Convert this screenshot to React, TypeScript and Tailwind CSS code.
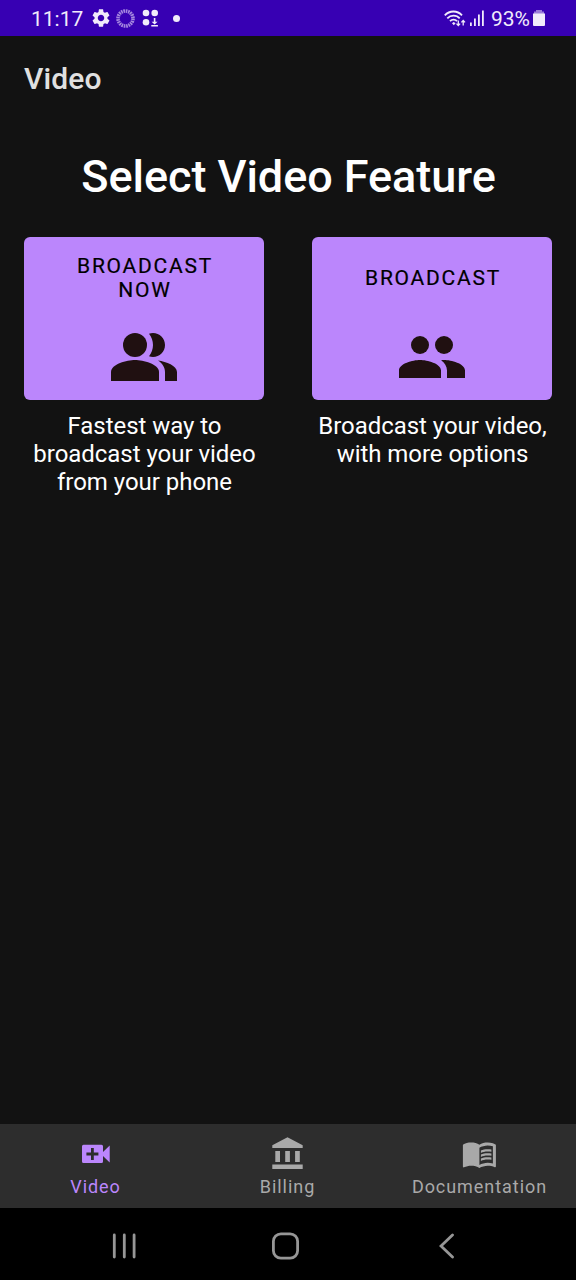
import type { ReactNode } from 'react';

const features = [
  {
    title: 'Broadcast Now',
    text: 'Fastest way to broadcast your video from your phone',
    icon: (
      <>
        <circle cx="9" cy="8" r="4" />
        <path d="M16.67 13.13C18.04 14.06 19 15.32 19 17v3h4v-3c0-2.18-3.57-3.47-6.33-3.87z" />
        <path d="M15 12c2.21 0 4-1.79 4-4s-1.79-4-4-4c-.47 0-.91.1-1.33.24C14.5 5.27 15 6.58 15 8s-.5 2.73-1.33 3.76c.42.14.86.24 1.33.24z" />
        <path d="M9 13c-2.67 0-8 1.34-8 4v3h16v-3c0-2.66-5.33-4-8-4z" />
      </>
    ),
  },
  {
    title: 'Broadcast',
    text: 'Broadcast your video, with more options',
    icon: (
      <>
        <circle cx="8" cy="8" r="3" />
        <circle cx="16" cy="8" r="3" />
        <path d="M8 13c-2.33 0-7 1.17-7 3.5V19h14v-2.5c0-2.33-4.67-3.5-7-3.5zm8 0c-.29 0-.62.02-.97.05 1.16.84 1.97 1.97 1.97 3.45V19h6v-2.5c0-2.33-4.67-3.5-7-3.5z" />
      </>
    ),
  },
];

const StatusBar = () => (
  <div className="flex h-9 items-center justify-between bg-[#3700b3] px-[31px] text-[21px] leading-9 text-[#f1ebfb]">
    <div className="flex items-center">
      <span className="w-[53px] pt-px">11:17</span>
      <svg className="ml-2 size-[18px]" viewBox="2 2 20 20" fill="currentColor">
        <path d="M19.14 12.94c.04-.3.06-.61.06-.94 0-.32-.02-.64-.07-.94l2.03-1.58c.18-.14.23-.41.12-.61l-1.92-3.32c-.12-.22-.37-.29-.59-.22l-2.39.96c-.5-.38-1.03-.7-1.62-.94l-.36-2.54c-.04-.24-.24-.41-.48-.41h-3.84c-.24 0-.43.17-.47.41l-.36 2.54c-.59.24-1.13.57-1.62.94l-2.39-.96c-.22-.08-.47 0-.59.22L2.74 8.87c-.12.21-.08.47.12.61l2.03 1.58c-.05.3-.09.63-.09.94s.02.64.07.94l-2.03 1.58c-.18.14-.23.41-.12.61l1.92 3.32c.12.22.37.29.59.22l2.39-.96c.5.38 1.03.7 1.62.94l.36 2.54c.05.24.24.41.48.41h3.84c.24 0 .44-.17.47-.41l.36-2.54c.59-.24 1.13-.56 1.62-.94l2.39.96c.22.08.47 0 .59-.22l1.92-3.32c.12-.22.07-.47-.12-.61l-2.01-1.58zM12 15.6c-1.98 0-3.6-1.62-3.6-3.6s1.62-3.6 3.6-3.6 3.6 1.62 3.6 3.6-1.62 3.6-3.6 3.6z" />
      </svg>
      <svg className="ml-1.5 size-[19px]" viewBox="0 0 19 19" fill="none" stroke="#a588df">
        <circle cx="9.5" cy="9.5" r="7.5" strokeWidth="3.6" strokeDasharray="1.65 0.706" />
      </svg>
      <svg className="ml-[7px] h-[18px] w-[17px]" viewBox="0 0 17 18" fill="currentColor">
        <circle cx="4" cy="4" r="3.3" />
        <circle cx="12.7" cy="4" r="3.3" />
        <circle cx="4" cy="13.2" r="3.3" />
        <path d="M11.8 9h1.6v3.7h2.2l-3 2.7-3-2.7h2.2zM9.3 16h6.6v1.5H9.3z" />
      </svg>
      <div className="ml-[14px] size-[7px] rounded-full bg-[#f1ebfb]" />
    </div>
    <div className="flex items-center">
      <svg className="mt-px h-[18px] w-[22px]" viewBox="0 0 22 18" fill="none" stroke="currentColor">
        <path d="M.8 5.3C5.5.2 13.4.2 18 5.3M3.3 8.3c3.4-3.7 9.1-3.7 12.4 0M6 11.1c2-2.1 5.1-2.1 7 0" strokeWidth="1.8" />
        <path d="M8 13.2l1.7-1.2 1.9 1.2-1.8 2z" fill="currentColor" stroke="none" />
        <path d="M14.3 10.5v5M12.5 13.6l1.8 2 1.8-2M19.2 15.5v-5M17.4 12.4l1.8-2 1.8 2" strokeWidth="1.3" />
      </svg>
      <svg className="ml-[3px] h-4 w-[15px]" viewBox="0 0 15 16" fill="currentColor">
        <path d="M1 12.5h1.8V16H1zM5 8.5h1.8V16H5zM9 4.5h1.8V16H9zM13 .5h1.8V16H13z" />
      </svg>
      <span className="ml-[7px] w-[42px] pt-px tracking-[-0.1px]">93%</span>
      <svg className="mb-px h-4 w-3" viewBox="0 0 12 16">
        <path d="M3 0h6v2H3zM1 1.5h10V4H1z" fill="#9b7cda" />
        <path d="M0 3.5h12V15a1 1 0 0 1-1 1H1a1 1 0 0 1-1-1z" fill="currentColor" />
      </svg>
    </div>
  </div>
);

const NavItem = ({ label, active, children }: { label: string; active?: boolean; children: ReactNode }) => (
  <button className={`flex flex-1 flex-col items-center pt-3 ${active ? 'text-[#bb86fc]' : 'text-[#a9a9a9]'}`}>
    <svg className="size-9" viewBox="0 0 36 36" fill="currentColor">
      {children}
    </svg>
    <span className="mt-[3px] pr-px text-[18px] leading-6 tracking-[0.95px]">{label}</span>
  </button>
);

export default function App() {
  return (
    <div className="flex h-screen flex-col bg-[#121212] font-['Roboto',sans-serif] text-white">
      <StatusBar />
      <header className="flex h-[84px] items-center px-6 pt-px">
        <h1 className="text-[30px] font-medium tracking-[0.15px] text-[#e0e0e0]">Video</h1>
      </header>
      <main className="flex-1 px-6">
        <h2 className="mt-[30px] pl-px text-center text-[45px] font-medium leading-[53px] tracking-[-0.06px]">
          Select Video Feature
        </h2>
        <div className="mt-[34px] grid grid-cols-2 gap-12">
          {features.map(feature => (
            <div key={feature.title}>
              <button className="flex h-[163px] w-full flex-col items-center rounded-md bg-[#bb86fc] px-10">
                <span className="flex h-[84px] items-center pb-[3px] pl-[2px] text-[21px] uppercase leading-6 tracking-[1.75px] text-black [-webkit-text-stroke:0.2px_black]">
                  {feature.title}
                </span>
                <svg className="size-[72px]" viewBox="0 0 24 24" fill="#201011">
                  {feature.icon}
                </svg>
              </button>
              <p className="mt-3 pl-px text-center text-[24px] leading-7 tracking-[-0.04px]">{feature.text}</p>
            </div>
          ))}
        </div>
      </main>
      <nav className="grid h-[84px] grid-cols-3 bg-[#2d2d2d]">
        <NavItem label="Video" active>
          <path
            fillRule="evenodd"
            d="M5.5 8.8h18q1.500 0 1.500 1.500V16l6.700-6.500v17L25 20v5.500q0 1.500-1.500 1.500h-18Q4 27 4 25.500V10.300q0-1.500 1.500-1.500zM13 12v4.600H8.400v2.800H13V24h2.800v-4.600h4.600v-2.800h-4.600V12z"
          />
        </NavItem>
        <NavItem label="Billing">
          <path d="M17.5 1.3L2.3 9.3V12h30.4V9.3zM5.3 15H10v11H5.3zM15.2 15h4.7v11h-4.7zM25.1 15h4.7v11h-4.7zM2.3 28.6h30.4V33H2.3z" />
        </NavItem>
        <NavItem label="Documentation">
          <g transform="translate(-0.6 -0.3) scale(1.5)">
            <path d="M21 5c-1.11-.35-2.33-.5-3.5-.5-1.95 0-4.05.4-5.5 1.5-1.45-1.1-3.55-1.5-5.5-1.5S2.45 4.9 1 6v14.65c0 .25.25.5.5.5.1 0 .15-.05.25-.05C3.1 20.45 5.05 20 6.5 20c1.95 0 4.05.4 5.5 1.5 1.35-.85 3.8-1.5 5.5-1.5 1.65 0 3.35.3 4.75 1.05.1.05.15.05.25.05.25 0 .5-.25.5-.5V6c-.6-.45-1.25-.75-2-1zm0 13.5c-1.1-.35-2.3-.5-3.5-.5-1.7 0-4.15.65-5.5 1.5V8c1.35-.85 3.8-1.5 5.5-1.5 1.2 0 2.4.15 3.5.5v11.5z" />
            <path d="M17.5 10.5c.88 0 1.73.09 2.5.26V9.24c-.79-.15-1.64-.24-2.5-.24-1.7 0-3.24.29-4.5.83v1.66c1.13-.64 2.7-.99 4.5-.99zM13 12.49v1.66c1.13-.64 2.7-.99 4.5-.99.88 0 1.73.09 2.5.26V11.9c-.79-.15-1.64-.24-2.5-.24-1.7 0-3.24.3-4.5.83zM17.5 14.33c-1.7 0-3.24.29-4.5.83v1.66c1.13-.64 2.7-.99 4.5-.99.88 0 1.73.09 2.5.26v-1.52c-.79-.16-1.64-.24-2.5-.24z" />
          </g>
        </NavItem>
      </nav>
      <footer className="flex h-[72px] items-center bg-black pl-[112px] pt-1">
        <svg className="h-7 w-6" viewBox="0 0 24 28" fill="none" stroke="#969696" strokeWidth="2.8" strokeLinecap="round">
          <path d="M2.3 3v22M12.3 3v22M22.1 3v22" />
        </svg>
        <svg className="ml-[135px] size-7" viewBox="0 0 28 28" fill="none" stroke="#969696" strokeWidth="2.8">
          <rect x="2.400" y="1.800" width="24.200" height="24.400" rx="7.5" />
        </svg>
        <svg className="ml-[140px] h-7 w-4" viewBox="0 0 16 28" fill="none" stroke="#969696" strokeWidth="2.8" strokeLinecap="round">
          <path d="M13.5 3L2 14l11.5 11" />
        </svg>
      </footer>
    </div>
  );
}
